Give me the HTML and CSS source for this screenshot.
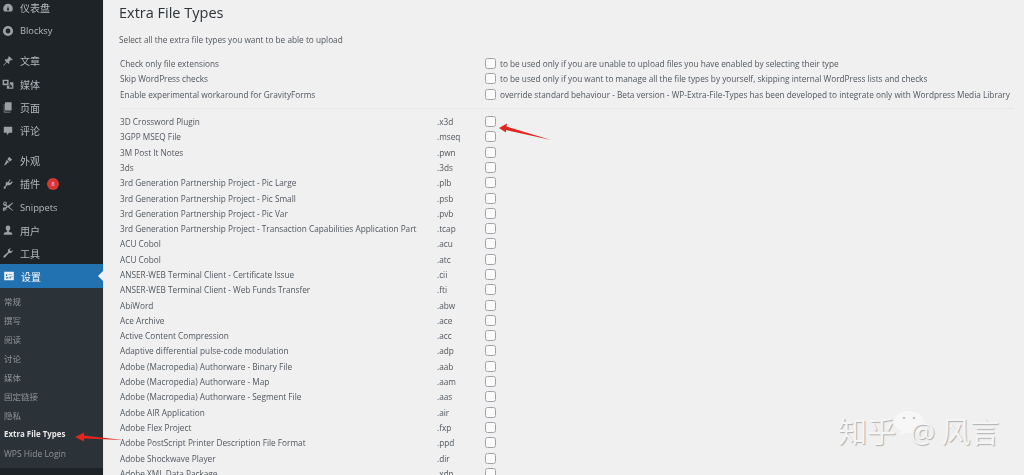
FILE: index.html
```html
<!DOCTYPE html>
<html lang="zh">
<head>
<meta charset="utf-8">
<title>Extra File Types</title>
<link rel="stylesheet" href="styles.css">
</head>
<body>
<aside class="side">
  <nav class="menu">
    <a class="item"><svg viewBox="0 0 20 20"><path d="M10 3a8 8 0 0 0-8 8c0 2 .6 3.500 1.500 5h13c.9-1.500 1.500-3 1.500-5a8 8 0 0 0-8-8zm0 4l1.500 4.500a1.800 1.800 0 1 1-3 0z"/></svg><span>仪表盘</span></a>
    <a class="item"><svg viewBox="0 0 20 20"><path fill-rule="evenodd" d="M10 1.500a8.500 8.500 0 1 0 0 17 8.500 8.500 0 0 0 0-17zm0 4.500a4 4 0 1 1 0 8 4 4 0 0 1 0-8z"/></svg><span class="lat">Blocksy</span></a>
    <div class="gap"></div>
    <a class="item"><svg viewBox="0 0 20 20"><path d="M12 2l6 6-2 1-1-1-3 3c.6 1.500.3 3-.6 4L8 12l-5 6-1-1 5-5.500L4 8c1-1 2.500-1.200 4-.6l3-3-1-1z"/></svg><span>文章</span></a>
    <a class="item"><svg viewBox="0 0 20 20"><path fill-rule="evenodd" d="M1 3h10v9H1zM3.500 5v4h5V5zM13 7h6v11H8v-5h5zM14.500 10l-3 6h6z"/></svg><span>媒体</span></a>
    <a class="item"><svg viewBox="0 0 20 20"><path d="M5 2h11v14H5zM3 5h1v13h10v1H3z"/></svg><span>页面</span></a>
    <a class="item"><svg viewBox="0 0 20 20"><path d="M3 3h14v10h-5l-4 4v-4H3z"/></svg><span>评论</span></a>
    <div class="gap"></div>
    <a class="item"><svg viewBox="0 0 20 20"><path d="M12 3l5 5-4 3-4-4zM8 8l4 4-3 1-1 2-5 3 3-6 1-2z"/></svg><span>外观</span></a>
    <a class="item"><svg viewBox="0 0 20 20"><path d="M13 2l1.500 1.500-3 3 2 2 3-3L18 7l-3.500 4c-1.500 1.500-3.500 1.500-5 .5L6 15v3H3v-3l3.500-3.500C5.500 10 6 8 7.500 6.500L8 6l1.500 1.500z"/></svg><span>插件</span><b class="badge">8</b></a>
    <a class="item"><svg viewBox="0 0 20 20"><path fill-rule="evenodd" d="M2 4a3 3 0 1 1 5 2.200l2.500 2.300L17 3h2l-7 7 7 6h-2l-7.500-5.500L7 12.500A3 3 0 1 1 5.500 11l2-1.500-2-1.700A3 3 0 0 1 2 4zm3-1.300a1.300 1.300 0 1 0 0 2.600 1.300 1.300 0 0 0 0-2.600zm0 11a1.300 1.300 0 1 0 0 2.600 1.300 1.300 0 0 0 0-2.600z"/></svg><span class="lat">Snippets</span></a>
    <a class="item"><svg viewBox="0 0 20 20"><path d="M10 2.500a3.800 3.800 0 0 1 3.800 4c0 2-1.200 4-2.300 4.500v1.500L17 15v3H3v-3l5.500-2.500V11C7.400 10.500 6.200 8.500 6.200 6.500a3.800 3.800 0 0 1 3.800-4z"/></svg><span>用户</span></a>
    <a class="item"><svg viewBox="0 0 20 20"><path d="M18 5a5 5 0 0 1-6.500 5L5 17.500a1.800 1.800 0 0 1-2.500-2.500L10 8.500A5 5 0 0 1 15 2l-2.500 2.500 3 3z"/></svg><span>工具</span></a>
    <a class="item active"><svg viewBox="0 0 20 20"><path fill-rule="evenodd" d="M2 3h16v14H2zM5 12v2h4v-2zM5 7v3h2V7zM9 7v1h6V7zM11 11v3h2v-3zM14 11v1h2v-1z"/></svg><span>设置</span></a>
    <div class="sub">
      <a>常规</a>
      <a>撰写</a>
      <a>阅读</a>
      <a>讨论</a>
      <a>媒体</a>
      <a>固定链接</a>
      <a>隐私</a>
      <a class="on">Extra File Types</a>
      <a>WPS Hide Login</a>
    </div>
  </nav>
</aside>
<main class="main">
  <h1>Extra File Types</h1>
  <p class="intro">Select all the extra file types you want to be able to upload</p>
  <div class="opts">
    <div class="opt"><span>Check only file extensions</span><i class="cb"></i><span class="note">to be used only if you are unable to upload files you have enabled by selecting their type</span></div>
    <div class="opt"><span>Skip WordPress checks</span><i class="cb"></i><span class="note">to be used only if you want to manage all the file types by yourself, skipping internal WordPress lists and checks</span></div>
    <div class="opt"><span>Enable experimental workaround for GravityForms</span><i class="cb"></i><span class="note">override standard behaviour - Beta version - WP-Extra-File-Types has been developed to integrate only with Wordpress Media Library</span></div>
  </div>
  <div class="types">
    <div class="row"><span>3D Crossword Plugin</span><span>.x3d</span><i class="cb"></i></div>
    <div class="row"><span>3GPP MSEQ File</span><span>.mseq</span><i class="cb"></i></div>
    <div class="row"><span>3M Post It Notes</span><span>.pwn</span><i class="cb"></i></div>
    <div class="row"><span>3ds</span><span>.3ds</span><i class="cb"></i></div>
    <div class="row"><span>3rd Generation Partnership Project - Pic Large</span><span>.plb</span><i class="cb"></i></div>
    <div class="row"><span>3rd Generation Partnership Project - Pic Small</span><span>.psb</span><i class="cb"></i></div>
    <div class="row"><span>3rd Generation Partnership Project - Pic Var</span><span>.pvb</span><i class="cb"></i></div>
    <div class="row"><span>3rd Generation Partnership Project - Transaction Capabilities Application Part</span><span>.tcap</span><i class="cb"></i></div>
    <div class="row"><span>ACU Cobol</span><span>.acu</span><i class="cb"></i></div>
    <div class="row"><span>ACU Cobol</span><span>.atc</span><i class="cb"></i></div>
    <div class="row"><span>ANSER-WEB Terminal Client - Certificate Issue</span><span>.cii</span><i class="cb"></i></div>
    <div class="row"><span>ANSER-WEB Terminal Client - Web Funds Transfer</span><span>.fti</span><i class="cb"></i></div>
    <div class="row"><span>AbiWord</span><span>.abw</span><i class="cb"></i></div>
    <div class="row"><span>Ace Archive</span><span>.ace</span><i class="cb"></i></div>
    <div class="row"><span>Active Content Compression</span><span>.acc</span><i class="cb"></i></div>
    <div class="row"><span>Adaptive differential pulse-code modulation</span><span>.adp</span><i class="cb"></i></div>
    <div class="row"><span>Adobe (Macropedia) Authorware - Binary File</span><span>.aab</span><i class="cb"></i></div>
    <div class="row"><span>Adobe (Macropedia) Authorware - Map</span><span>.aam</span><i class="cb"></i></div>
    <div class="row"><span>Adobe (Macropedia) Authorware - Segment File</span><span>.aas</span><i class="cb"></i></div>
    <div class="row"><span>Adobe AIR Application</span><span>.air</span><i class="cb"></i></div>
    <div class="row"><span>Adobe Flex Project</span><span>.fxp</span><i class="cb"></i></div>
    <div class="row"><span>Adobe PostScript Printer Description File Format</span><span>.ppd</span><i class="cb"></i></div>
    <div class="row"><span>Adobe Shockwave Player</span><span>.dir</span><i class="cb"></i></div>
    <div class="row"><span>Adobe XML Data Package</span><span>.xdp</span><i class="cb"></i></div>
  </div>
</main>
<svg class="arrow a1" viewBox="0 0 54 20"><path d="M1 6L9 1.500 8.500 4.500 53 18 8 8 8 10.500z"/></svg>
<svg class="arrow a2" viewBox="0 0 50 12"><path d="M1 6L10 1.500 10 4.500 49 9 10 7.500 10 10.500z"/></svg>
<div class="mark">
  <svg class="bubble" viewBox="0 0 34 28"><path d="M17 1c9 0 15 5 15 11s-6 11-13 11c-2 0-3 0-5-1l-6 4 1-6C4 18 2 15 2 12 2 6 8 1 17 1z"/><circle class="eye" cx="12" cy="8" r="1.300"/><circle class="eye" cx="22" cy="8" r="1.300"/></svg>
  <span>知乎</span><span class="at">@</span><span>风言</span>
</div>
</body>
</html>
```
FILE: styles.css
```css
* { box-sizing: border-box; }
html, body { margin: 0; height: 475px; overflow: hidden; }
body {
  display: flex;
  position: relative;
  background: #f0f0f1;
  font-family: "Open Sans", "Noto Sans CJK SC", sans-serif;
  color: #50575e;
}
.side {
  width: 104px;
  flex: none;
  background: #1d2327;
  border-right: 1px solid #e8e8e9;
  filter: blur(.35px);
}
.menu { display: flex; flex-direction: column; margin-top: -4px; }
.gap { height: 7px; }
.item {
  display: flex;
  align-items: center;
  height: 23.2px;
  padding-left: 2px;
  gap: 6px;
  font-size: 10px;
  color: #b4b9bd;
}
.item svg { width: 12px; height: 12px; fill: #9a9fa3; flex: none; }
.lat { font-size: 9.300px; }
.badge {
  width: 12px;
  height: 12px;
  margin-left: 1px;
  border-radius: 50%;
  background: #d63638;
  color: #f3c9c9;
  font-size: 6px;
  font-weight: 400;
  line-height: 12px;
  text-align: center;
}
.active {
  position: relative;
  margin-top: -1px;
  height: 24.2px;
  background: #2271b1;
  color: #fff;
  padding-left: 3px;
}
.active svg { fill: #f0f0f1; }
.active::after {
  content: "";
  position: absolute;
  right: -1px;
  top: 6px;
  border: 6px solid transparent;
  border-left: 0;
  border-right-color: #f0f0f1;
}
.sub {
  display: flex;
  flex-direction: column;
  height: 180px;
  padding-top: 4px;
  background: #2c3338;
  color: #8f959a;
  font-size: 8.500px;
}
.sub a { height: 18.950px; line-height: 19px; padding-left: 4px; }
.sub .on { color: #e6e7e8; font-weight: 700; font-size: 7.900px; }
.main { flex: 1; padding: 4px 0 0 15px; min-width: 0; filter: blur(.35px); }
h1 {
  margin: 0 0 10px;
  font-size: 14.500px;
  font-weight: 400;
  line-height: 18px;
  color: #2c3338;
}
.intro { margin: 0 0 8px; font-size: 8.250px; line-height: 16px; }
.opts {
  padding-bottom: 6px;
  margin-left: 1px;
  margin-right: 10px;
  border-bottom: 1px solid #e6e6e7;
}
.opt {
  display: grid;
  grid-template-columns: 365px 11px 1fr;
  height: 15.300px;
  align-items: center;
  font-size: 8.250px;
  white-space: nowrap;
}
.note { margin-left: 4px; }
.types { margin: 5px 0 0 1px; }
.row {
  display: grid;
  grid-template-columns: 317px 48px 11px;
  height: 15.300px;
  align-items: center;
  font-size: 8.250px;
  white-space: nowrap;
}
.cb {
  display: block;
  width: 11px;
  height: 11px;
  border: 1px solid #a0a3a8;
  border-radius: 2.500px;
  background: #fbfbfb;
}
.arrow { position: absolute; fill: #e0261f; }
.a1 { left: 498px; top: 122px; width: 54px; height: 20px; }
.a2 { left: 74px; top: 431px; width: 50px; height: 12px; }
.mark {
  position: absolute;
  left: 838px;
  top: 412px;
  display: flex;
  gap: 6px;
  font-size: 29px;
  line-height: 40px;
  color: #f5f5f5;
  text-shadow: 1px 1px 1px #b0b0b0;
  white-space: nowrap;
}
.bubble {
  position: absolute;
  left: 54px;
  top: -2px;
  width: 34px;
  height: 28px;
  fill: #f7f7f7;
}
.eye { fill: #c4c4c4; }
.mark span { position: relative; }
.at { font-size: 28px; margin-left: 8px; }
```
